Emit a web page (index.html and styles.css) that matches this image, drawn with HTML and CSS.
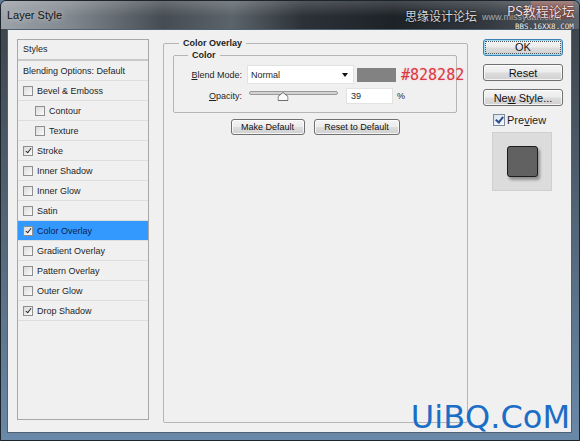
FILE: index.html
```html
<!DOCTYPE html>
<html lang="en">
<head>
    <meta charset="UTF-8">
    <meta name="viewport" content="width=device-width, initial-scale=1.0">
    <title>Layer Style</title>
    <link rel="stylesheet" href="styles.css">
</head>
<body>
    <div class="window">
        <div class="titlebar">
            <span class="title">Layer Style</span>
            <div class="close-btn"></div>
            <span class="mark-cn">思缘设计论坛</span>
            <span class="mark-www">www.missyuan.com</span>
            <span class="mark-ps">PS教程论坛</span>
            <span class="mark-bbs">BBS.16XX8.COM</span>
        </div>

        <div class="client">
            <div class="styles-list">
                <div class="styles-head">Styles</div>
                <div class="style-row">Blending Options: Default</div>
                <div class="style-row"><span class="cb"></span>Bevel &amp; Emboss</div>
                <div class="style-row sub"><span class="cb"></span>Contour</div>
                <div class="style-row sub"><span class="cb"></span>Texture</div>
                <div class="style-row"><span class="cb on"></span>Stroke</div>
                <div class="style-row"><span class="cb"></span>Inner Shadow</div>
                <div class="style-row"><span class="cb"></span>Inner Glow</div>
                <div class="style-row"><span class="cb"></span>Satin</div>
                <div class="style-row active"><span class="cb on"></span>Color Overlay</div>
                <div class="style-row"><span class="cb"></span>Gradient Overlay</div>
                <div class="style-row"><span class="cb"></span>Pattern Overlay</div>
                <div class="style-row"><span class="cb"></span>Outer Glow</div>
                <div class="style-row"><span class="cb on"></span>Drop Shadow</div>
            </div>

            <fieldset class="overlay-group">
                <legend>Color Overlay</legend>
                <fieldset class="color-group">
                    <legend>Color</legend>
                    <div class="field-row">
                        <span class="field-label"><u>B</u>lend Mode:</span>
                        <div class="select">
                            <span>Normal</span>
                            <span class="select-arrow"></span>
                        </div>
                        <span class="swatch"></span>
                        <span class="hex">#828282</span>
                    </div>
                    <div class="field-row second">
                        <span class="field-label"><u>O</u>pacity:</span>
                        <div class="slider">
                            <div class="slider-track"></div>
                            <svg class="slider-thumb" style="left: 38%;" width="11" height="9" viewBox="0 0 11 9">
                                <path d="M5.5 0.5 L10.5 4.5 L10.5 8.5 L0.5 8.5 L0.5 4.5 Z" fill="#fafafa" stroke="#6e6e6e"/>
                            </svg>
                        </div>
                        <div class="num-input">39</div>
                        <span class="unit">%</span>
                    </div>
                </fieldset>
                <div class="default-actions">
                    <button class="btn btn-small make">Make Default</button>
                    <button class="btn btn-small reset">Reset to Default</button>
                </div>
            </fieldset>

            <div class="actions">
                <button class="btn btn-big ok"><span>OK</span></button>
                <button class="btn btn-big">Reset</button>
                <button class="btn btn-big">Ne<u>w</u> Style...</button>
                <label class="preview-toggle"><span class="cb big on"></span><span>Pre<u>v</u>iew</span></label>
                <div class="preview-box">
                    <div class="preview-square"></div>
                </div>
            </div>

            <div class="mark-bottom">UiBQ.CoM</div>
        </div>
    </div>
</body>
</html>
```

FILE: styles.css
```css
body {
    margin: 0;
    font-family: 'Liberation Sans', Arial, sans-serif;
    font-size: 9px;
    color: #1e1e1e;
    background-color: #5f7e9c;
}

.window {
    width: 580px;
    height: 441px;
    box-sizing: border-box;
    border: 1px solid #1c242c;
    border-radius: 6px 6px 0 0;
    background: linear-gradient(180deg, #3a4148 0%, #4c5a68 35%, #6a89a8 100%);
    display: flex;
    flex-direction: column;
    overflow: hidden;
}

.titlebar {
    position: relative;
    flex: none;
    height: 28px;
    padding-left: 6px;
    display: flex;
    align-items: center;
    background:
        linear-gradient(180deg, rgba(255, 255, 255, 0.18) 0%, rgba(255, 255, 255, 0) 55%),
        linear-gradient(90deg, #9ba2a8 0%, #80878e 12%, #454c53 28%, #5c646b 40%, #2c3238 52%, #1d2227 68%, #33393f 84%, #5d646b 100%);
}

.title {
    font-size: 11px;
    color: #141414;
    text-shadow: 0 0 6px rgba(255, 255, 255, 0.7);
}

.close-btn {
    position: absolute;
    left: 530px;
    top: 0;
    width: 42px;
    height: 18px;
    border-radius: 0 0 4px 4px;
    background: linear-gradient(180deg, #c98a80 0%, #a8564a 50%, #8c3a30 100%);
    opacity: 0.55;
}

.mark-cn {
    position: absolute;
    left: 404px;
    top: 8px;
    font-family: 'Noto Sans CJK SC', sans-serif;
    font-size: 12px;
    line-height: 14px;
    color: #d6d6d6;
    text-shadow: 0 0 2px #000;
}

.mark-www {
    position: absolute;
    left: 481px;
    top: 11px;
    font-size: 9px;
    color: #a8adb2;
}

.mark-ps {
    position: absolute;
    left: 506px;
    top: 1px;
    font-family: 'Noto Sans CJK SC', sans-serif;
    font-size: 13px;
    line-height: 17px;
    color: #f3e2e2;
    text-shadow: 0 0 1px #3a1010, 0 0 1px #3a1010;
}

.mark-bbs {
    position: absolute;
    left: 514px;
    top: 21px;
    z-index: 2;
    font-family: 'DejaVu Sans Mono', monospace;
    font-size: 7.5px;
    line-height: 10px;
    color: #f2f2f2;
    text-shadow: 0 0 1px #333, 0 0 1px #333;
}

.client {
    position: relative;
    flex: 1;
    margin: 0 7px 7px 6px;
    padding-left: 9px;
    display: flex;
    align-items: flex-start;
    background-color: #f0f0f0;
    border: 1px solid #4f6172;
}

/* styles list */

.styles-list {
    width: 132px;
    height: 381px;
    box-sizing: border-box;
    margin-top: 9px;
    border: 1px solid #a8a8a8;
    background-color: #f0f0f0;
}

.styles-head {
    height: 19px;
    line-height: 19px;
    padding-left: 5px;
    border-bottom: 2px solid #c9c9c9;
}

.style-row {
    height: 19px;
    padding-left: 5px;
    display: flex;
    align-items: center;
    gap: 4px;
    border-bottom: 1px solid #dddddd;
}

.style-row.sub {
    padding-left: 17px;
}

.style-row.active {
    background-color: #3399ff;
    color: #0c1d4d;
}

.cb {
    position: relative;
    flex: none;
    width: 10px;
    height: 10px;
    box-sizing: border-box;
    border: 1px solid #8e8f8f;
    background: linear-gradient(135deg, #dadada, #fbfbfb);
}

.cb.on::after {
    content: "";
    position: absolute;
    left: 2.5px;
    top: 0;
    width: 2px;
    height: 5px;
    border: solid #222;
    border-width: 0 1.4px 1.4px 0;
    transform: rotate(38deg);
}

/* color overlay group */

fieldset {
    margin: 0;
    min-width: 0;
}

legend {
    font-weight: bold;
    line-height: 12px;
    padding: 0 4px;
}

.overlay-group {
    margin: 7px 0 0 14px;
    width: 305px;
    height: 386px;
    box-sizing: border-box;
    padding: 0 10px 0 9px;
    border: 1px solid #b5b5b5;
    border-radius: 2px;
}

.overlay-group > legend {
    margin-left: 6px;
}

.color-group {
    padding: 4px 10px 8px 10px;
    border: 1px solid #b5b5b5;
    border-radius: 2px;
}

.color-group > legend {
    margin-left: 4px;
}

.field-row {
    display: flex;
    align-items: center;
    height: 19px;
}

.field-row > * {
    flex: none;
}

.field-row.second {
    height: 16px;
    margin-top: 4px;
    align-items: stretch;
}

.field-label {
    width: 58px;
    margin-right: 5px;
    text-align: right;
    align-self: center;
}

.select {
    width: 107px;
    height: 19px;
    box-sizing: border-box;
    padding: 0 5px 0 3px;
    display: flex;
    align-items: center;
    justify-content: space-between;
    background-color: #fff;
    border: 1px solid #e2e2e2;
}

.select-arrow {
    width: 0;
    height: 0;
    border-left: 3.5px solid transparent;
    border-right: 3.5px solid transparent;
    border-top: 4px solid #111;
}

.swatch {
    width: 39px;
    height: 14px;
    margin-left: 3px;
    background-color: #828282;
}

.hex {
    margin-left: 5px;
    font-family: 'DejaVu Sans Mono', monospace;
    font-size: 15px;
    color: #d63a45;
    text-shadow: 0 0 2px rgba(255, 180, 180, 0.8);
}

.slider {
    position: relative;
    width: 89px;
    margin-left: 2px;
}

.slider-track {
    margin-top: 3px;
    height: 2px;
    border-radius: 2px;
    background-color: #d2d2d2;
    border: 1px solid #9a9a9a;
}

.slider-thumb {
    position: absolute;
    top: 4px;
    transform: translateX(-50%);
}

.num-input {
    width: 47px;
    margin-left: 8px;
    box-sizing: border-box;
    padding-left: 4px;
    line-height: 15px;
    background-color: #fff;
    border: 1px solid #e2e2e2;
}

.unit {
    margin-left: 4px;
    align-self: center;
}

.btn {
    font-family: 'Liberation Sans', Arial, sans-serif;
    color: #111;
    padding: 0;
    border: 1px solid #707070;
    border-radius: 3px;
    background: linear-gradient(180deg, #f4f4f4 0%, #ececec 48%, #dddddd 52%, #d0d0d0 100%);
    box-shadow: inset 0 0 0 1px rgba(255, 255, 255, 0.75);
}

.default-actions {
    display: flex;
    justify-content: center;
    gap: 9px;
    margin-top: 6px;
}

.btn-small {
    height: 16px;
    font-size: 9px;
}

.btn-small.make {
    width: 74px;
}

.btn-small.reset {
    width: 86px;
}

/* right column */

.actions {
    width: 80px;
    margin: 9px 0 0 15px;
    display: flex;
    flex-direction: column;
}

.btn-big {
    height: 17px;
    font-size: 11px;
    line-height: 14px;
}

.btn-big + .btn-big {
    margin-top: 8px;
}

.btn-big.ok {
    border-color: #3c7fb1;
    box-shadow: inset 0 0 0 1px #9fdcf5;
}

.btn-big.ok span {
    display: block;
    margin: 1px;
    border: 1px dotted #555;
    line-height: 11px;
}

.preview-toggle {
    margin-top: 7px;
    height: 13px;
    padding-left: 10px;
    display: flex;
    align-items: center;
    gap: 2px;
    font-size: 11px;
}

.cb.big {
    width: 12px;
    height: 12px;
    border-color: #7e8a9a;
    background: linear-gradient(135deg, #d8e4f0, #f8fbff);
}

.cb.big.on::after {
    left: 3px;
    width: 3px;
    height: 6px;
    border-color: #2c4f8c;
    border-width: 0 2px 2px 0;
}

.preview-box {
    width: 60px;
    height: 59px;
    margin: 6px 0 0 9px;
    box-sizing: border-box;
    display: flex;
    align-items: center;
    justify-content: center;
    background-color: #dcdcdc;
    border: 1px solid #cfcfcf;
}

.preview-square {
    width: 31px;
    height: 31px;
    box-sizing: border-box;
    border: 1px solid #1c1c1c;
    border-radius: 3px;
    background-color: #616161;
    box-shadow: 2px 3px 3px rgba(0, 0, 0, 0.35);
}

.mark-bottom {
    position: absolute;
    top: 371px;
    right: 1px;
    font-family: 'DejaVu Sans', sans-serif;
    font-size: 32px;
    line-height: 32px;
    color: #1c6dc6;
}
```
